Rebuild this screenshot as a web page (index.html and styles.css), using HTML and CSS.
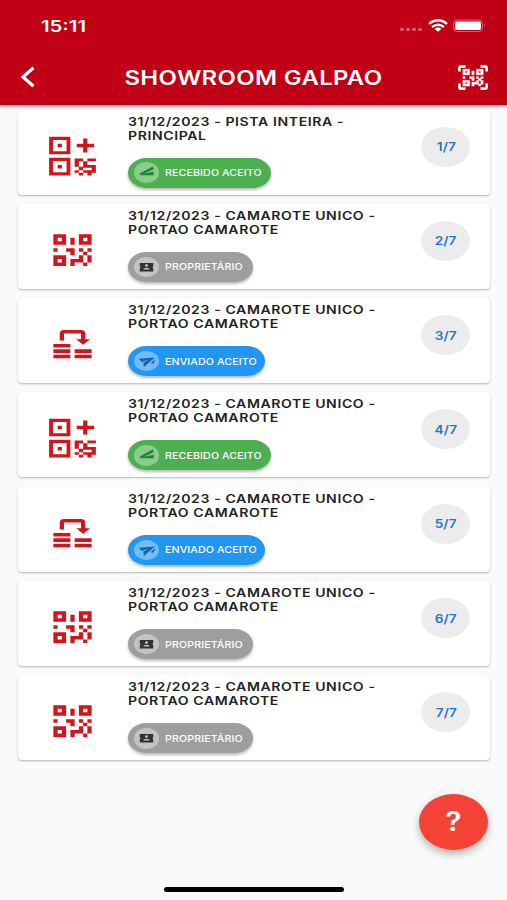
FILE: index.html
```html
<!DOCTYPE html>
<html lang="pt-BR">
<head>
<meta charset="utf-8">
<title>Showroom Galpao</title>
<link rel="stylesheet" href="styles.css">
</head>
<body>
<svg class="defs" width="0" height="0" aria-hidden="true">
  <symbol id="qr" viewBox="0 0 24 24" preserveAspectRatio="none"><path d="M3,11H5V13H3V11M11,5H13V9H11V5M9,11H13V15H11V13H9V11M15,11H17V13H19V11H21V13H19V15H21V19H19V21H17V19H13V21H11V17H15V15H17V13H15V11M19,19V15H17V19H19M15,3H21V9H15V3M17,5V7H19V5H17M3,3H9V9H3V3M5,5V7H7V5H5M3,15H9V21H3V15M5,17V19H7V17H5Z"/></symbol>
  <symbol id="qr-plus" viewBox="0 0 24 24" preserveAspectRatio="none"><path fill-rule="evenodd" d="M1 1H11V11H1ZM2.8 2.8V9.2H9.2V2.8ZM5 5H7V7H5ZM1 13H11V23H1ZM2.8 14.8V21.2H9.2V14.8ZM5 17H7V19H5ZM17 2H19V5H22.2V7H19V10H17V7H14V5H17ZM13 13.3H17V15H15V18H13ZM19 13.3H23V15H19ZM17 15H19V17H23V21.5H21V23H19V21.5H17V20H21V18.7H17ZM15 18H17V20H15ZM13 20H15V21.5H13ZM15 21.5H17V23H15Z"/></symbol>
  <symbol id="transfer" viewBox="0 0 24 24" preserveAspectRatio="none"><path d="M3 12H11V14H3ZM3 15H11V17H3ZM3 18H11V20H3ZM13 15H21V17H13ZM13 18H21V20H13ZM6 10V6Q6 4 8 4H16Q18 4 18 6V9.2H20.2L17 12.4L13.8 9.2H16V6H8V10Z"/></symbol>
  <symbol id="received" viewBox="0 0 24 20" preserveAspectRatio="none"><path d="M5 11.5L18 4.5L19 7L8 12ZM5 12.3L19 9.5V13H6Z"/></symbol>
  <symbol id="sent" viewBox="0 0 24 20" preserveAspectRatio="none"><path d="M4.5 7.5L20 6.3L9.5 15.5L9 11.5L14 8.3L7.5 10.8ZM16 12L20.5 7.5L18.8 12.5Z"/></symbol>
  <symbol id="ticket" viewBox="0 0 24 20" preserveAspectRatio="none"><path fill-rule="evenodd" d="M5.5 5.8H18.5V8.8Q17 10 18.5 11.2V14.2H5.5V11.2Q7 10 5.5 8.8ZM12 7A1.5 1.3 0 1 0 12 9.6A1.5 1.3 0 1 0 12 7ZM9 12.2H15Q15 10.6 12 10.6Q9 10.6 9 12.2Z"/></symbol>
</svg>
<div class="screen">
  <header class="header">
    <div class="status">
      <span class="clock">15:11</span>
      <svg class="indicators" viewBox="0 0 88 16" width="88" height="16">
        <g fill="#fff" opacity=".35"><rect x="1" y="10" width="4" height="3" rx="1"/><rect x="7" y="10" width="4" height="3" rx="1"/><rect x="13" y="10" width="4" height="3" rx="1"/><rect x="19" y="10" width="4" height="3" rx="1"/></g>
        <g fill="none" stroke="#fff" stroke-width="2.3"><path d="M30 5.8Q39 -1.2 48 5.8"/><path d="M33 9Q39 4.5 45 9"/></g>
        <path fill="#fff" d="M35.6 10.9Q39 8.3 42.4 10.9L39 13.8Z"/>
        <rect x="54.5" y="2" width="29" height="11.5" rx="3.5" fill="none" stroke="#fff" stroke-opacity=".4"/>
        <rect x="56" y="3.5" width="26" height="8.5" rx="2" fill="#fff"/>
        <path d="M85.2 5.8Q87 7.5 85.2 9.3Z" fill="#fff" opacity=".5"/>
      </svg>
    </div>
    <div class="toolbar">
      <svg class="back" viewBox="0 0 16 22" width="16" height="22"><path d="M13.5 1.8L3 11L13.5 20.2" fill="none" stroke="#fff" stroke-width="3.2"/></svg>
      <h1><span class="title">SHOWROOM GALPAO</span></h1>
      <svg class="scan" viewBox="0 0 30 25" width="30" height="25">
        <path d="M1.4 6.5V3Q1.4 1.4 3 1.4H7.5M22.5 1.4H27Q28.6 1.4 28.6 3V6.5M1.4 18.5V22Q1.4 23.6 3 23.6H7.5M22.5 23.6H27Q28.6 23.6 28.6 22V18.5" fill="none" stroke="#fff" stroke-width="2.6"/>
        <use href="#qr" x="1.5" y="1.4" width="27" height="22.4" fill="#fff" stroke="#fff" stroke-width=".5"/>
      </svg>
    </div>
  </header>
  <main class="list">
    <article class="card">
      <svg class="kind"><use href="#qr-plus"/></svg>
      <div class="info"><h2>31/12/2023 - PISTA INTEIRA -<br>PRINCIPAL</h2>
        <div class="chip received"><svg class="avatar"><use href="#received"/></svg><span>RECEBIDO ACEITO</span></div></div>
      <div class="count"><span>1/7</span></div>
    </article>
    <article class="card">
      <svg class="kind"><use href="#qr"/></svg>
      <div class="info"><h2>31/12/2023 - CAMAROTE UNICO -<br>PORTAO CAMAROTE</h2>
        <div class="chip owner"><svg class="avatar"><use href="#ticket"/></svg><span>PROPRIETÁRIO</span></div></div>
      <div class="count"><span>2/7</span></div>
    </article>
    <article class="card">
      <svg class="kind"><use href="#transfer"/></svg>
      <div class="info"><h2>31/12/2023 - CAMAROTE UNICO -<br>PORTAO CAMAROTE</h2>
        <div class="chip sent"><svg class="avatar"><use href="#sent"/></svg><span>ENVIADO ACEITO</span></div></div>
      <div class="count"><span>3/7</span></div>
    </article>
    <article class="card">
      <svg class="kind"><use href="#qr-plus"/></svg>
      <div class="info"><h2>31/12/2023 - CAMAROTE UNICO -<br>PORTAO CAMAROTE</h2>
        <div class="chip received"><svg class="avatar"><use href="#received"/></svg><span>RECEBIDO ACEITO</span></div></div>
      <div class="count"><span>4/7</span></div>
    </article>
    <article class="card">
      <svg class="kind"><use href="#transfer"/></svg>
      <div class="info"><h2>31/12/2023 - CAMAROTE UNICO -<br>PORTAO CAMAROTE</h2>
        <div class="chip sent"><svg class="avatar"><use href="#sent"/></svg><span>ENVIADO ACEITO</span></div></div>
      <div class="count"><span>5/7</span></div>
    </article>
    <article class="card">
      <svg class="kind"><use href="#qr"/></svg>
      <div class="info"><h2>31/12/2023 - CAMAROTE UNICO -<br>PORTAO CAMAROTE</h2>
        <div class="chip owner"><svg class="avatar"><use href="#ticket"/></svg><span>PROPRIETÁRIO</span></div></div>
      <div class="count"><span>6/7</span></div>
    </article>
    <article class="card">
      <svg class="kind"><use href="#qr"/></svg>
      <div class="info"><h2>31/12/2023 - CAMAROTE UNICO -<br>PORTAO CAMAROTE</h2>
        <div class="chip owner"><svg class="avatar"><use href="#ticket"/></svg><span>PROPRIETÁRIO</span></div></div>
      <div class="count"><span>7/7</span></div>
    </article>
  </main>
  <button class="help" type="button"><span>?</span></button>
  <div class="home"></div>
</div>
</body>
</html>
```
FILE: styles.css
```css
* { box-sizing: border-box; }
body { margin: 0; background: #fafafa; font-family: Inter, "Liberation Sans", sans-serif; }
.defs { position: absolute; }
.screen { position: relative; width: 507px; height: 900px; overflow: hidden; background: #fafafa; }

.header { position: relative; height: 105px; background: #c10015; color: #fff; box-shadow: 0 1px 4px rgba(0, 0, 0, .4); }
.status { display: flex; justify-content: space-between; height: 50px; padding: 17px 20px 0 41px; }
.clock { font-size: 15.5px; font-weight: 600; line-height: 19px; transform: scaleX(1.31); transform-origin: left; }
.indicators { margin-top: 1px; }
.toolbar { display: flex; align-items: center; height: 55px; padding: 0 19px 0 20px; }
.back { margin-top: -1px; }
h1 { flex: 1; margin: 0; text-align: center; font-size: 20px; font-weight: 600; line-height: 24px; }
.title { display: inline-block; transform: translate(6.5px, -.5px) scaleX(1.195); letter-spacing: .3px; }

.list { display: flex; flex-direction: column; gap: 9.33px; padding: 4.5px 17px 0 18px; }
.card { display: flex; height: 85px; border-radius: 4px; background: #fff; box-shadow: 0 1px 2px rgba(0, 0, 0, .28); }
.kind { flex: none; width: 51px; height: 42.2px; margin: 25px 0 0 29.3px; fill: #d2141d; }
.info { flex: none; width: 323.2px; padding: 5px 0 0 29.7px; }
h2 { width: 240px; height: 28px; margin: 0; font-size: 11.6px; font-weight: 600; line-height: 14px; letter-spacing: .5px; white-space: nowrap; color: #222; transform: scaleX(1.212); transform-origin: left; }
.chip { display: flex; align-items: center; height: 30px; margin-top: 15px; padding-left: 6px; border-radius: 18px / 15px; color: #fff; box-shadow: 0 2px 3px rgba(0, 0, 0, .28); }
.chip span { margin-left: 6px; font-size: 9.5px; font-weight: 500; letter-spacing: .1px; white-space: nowrap; transform: scaleX(1.12); transform-origin: left; }
.avatar { flex: none; width: 25px; height: 20.5px; border-radius: 50%; }
.received { width: 143px; background: #4caf50; }
.received .avatar { background: #8bcc8d; fill: #23823a; }
.sent { width: 137px; background: #2196f3; }
.sent .avatar { background: #72bdf8; fill: #1460b8; }
.owner { width: 125px; background: #9e9e9e; }
.owner .avatar { background: #c3c3c3; fill: #333; }
.count { flex: none; display: grid; place-items: center; width: 49px; height: 40px; margin-top: 17px; border-radius: 50%; background: #ececec; color: #2674ca; font-size: 12px; font-weight: 600; }
.count span { transform: scaleX(1.14); letter-spacing: .1px; }

.help { position: absolute; left: 419px; top: 794px; width: 69px; height: 56px; padding: 0; border: 0; border-radius: 50%; background: #f44336; color: #fff; font: 600 27px/56px Inter, sans-serif; box-shadow: 0 4px 8px rgba(0, 0, 0, .3); }
.help span { display: inline-block; transform: scaleX(1.1); }
.home { position: absolute; left: 164px; top: 887px; width: 180px; height: 5px; border-radius: 3px; background: #000; }
```
